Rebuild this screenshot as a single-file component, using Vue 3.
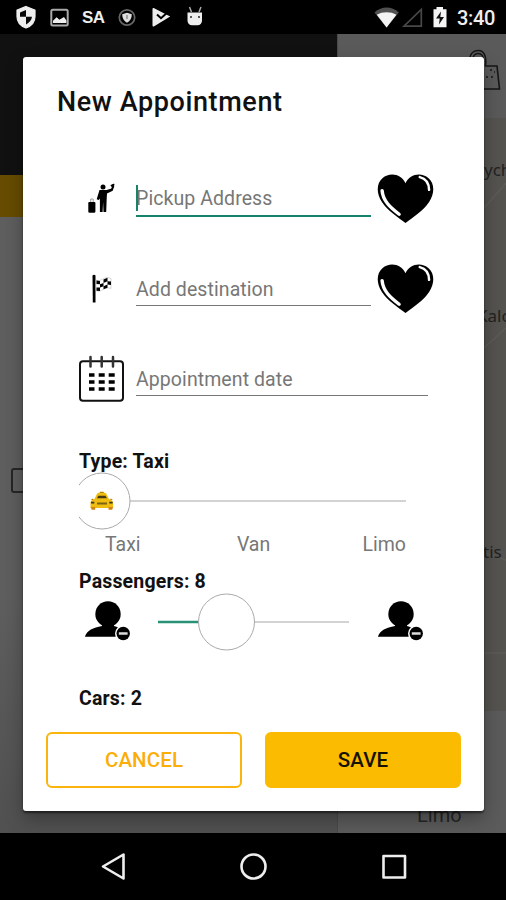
<script setup>
import { ref } from 'vue'

const pickup = ref('')
const destination = ref('')
const date = ref('')
const types = ['Taxi', 'Van', 'Limo']
</script>

<template>
  <div class="screen">
    <header class="status">
      <svg class="status-left" width="210" height="34" viewBox="0 0 210 34">
        <path d="M26 6.500l9 3.600v6.400c0 5.400-3.800 9.600-9 11.500-5.200-1.900-9-6.100-9-11.500v-6.400z" fill="#eee" stroke="#eee" stroke-width="1.200" />
        <path d="M26 10v6.800h-6v-4.400zM26 16.800h6c-.4 3.500-2.800 6.200-6 7.700z" fill="#080808" />
        <rect x="51.300" y="9.800" width="16.400" height="15.600" rx="1.500" fill="none" stroke="#a9a9a9" stroke-width="2" />
        <path d="M53 23v-2.200l3.600-3.600 2.800 2.600 4.600-2.800 2.400 3.400V23z" fill="#eee" />
        <circle cx="127" cy="17.500" r="7.700" fill="none" stroke="#666" stroke-width="1.700" />
        <path d="M127 12.800l4.800 1.500c0 4-1.500 6.600-4.800 8.500-3.300-1.900-4.800-4.500-4.800-8.500z" fill="#ddd" />
        <path d="M127 15v4" stroke="#888" stroke-width="1.400" />
        <path d="M152.500 9c0-1 .8-1.200 1.700-.7l16 8.300-16 9.600c-1 .6-1.700.2-1.700-.8z" fill="#eee" />
        <path d="M157 14.500l4 3.700 7.500-6.700" fill="none" stroke="#000" stroke-width="2" />
        <path d="M187.500 12.500h14.500v8c0 3-2 4.800-4.500 4.800h-5.500c-2.500 0-4.500-1.800-4.500-4.800z" fill="#eee" />
        <path d="M189.500 7l2 5M201 7l-2 5" stroke="#aaa" stroke-width="1.500" />
        <circle cx="191" cy="17" r=".9" fill="#111" /><circle cx="199" cy="17" r=".9" fill="#111" />
      </svg>
      <span class="sa">SA</span>
      <svg class="status-right" width="75" height="34" viewBox="374 0 75 34">
        <path d="M374.500 12.500c7.300-6.600 17-6.600 24.300 0L386.600 27.500z" fill="#505050" />
        <path d="M376.800 14.800c5.600-3.300 14-3.300 19.600 0L386.600 27.500z" fill="#f3f3f3" />
        <path d="M404 26.200h17.300V9.500z" fill="none" stroke="#484848" stroke-width="1.700" />
        <path d="M433.500 9.300h3V7h6.500v2.300h3.500v18h-13z" fill="#f5f5f5" />
        <path d="M441 11.500l-5 7h3.700l-.7 6 5-7.500h-3.700z" fill="#111" />
      </svg>
      <span class="clock">3:40</span>
    </header>

    <main class="app">
      <aside class="drawer">
        <div class="drawer-head"></div>
        <div class="drawer-bar"></div>
        <svg class="drawer-icon" width="24" height="26" viewBox="0 0 24 26"><rect x="1" y="1" width="26" height="23" rx="2" fill="none" stroke="#262626" stroke-width="2" /></svg>
      </aside>
      <section class="map">
        <div class="map-head">
          <svg width="34" height="44" viewBox="0 0 34 44" fill="none" stroke="#161616" stroke-width="1.600">
            <path d="M1 10C1 4 5 1.500 9.500 1.500S18 6 16.500 17" /><path d="M4 10c0-4 2.500-5.500 5.500-5.500s5.500 3 5 8" />
            <path d="M16 17h12l2.500 23H14" /><path d="M17 28h2m3 0h2M21 21h2m2 2h1" />
          </svg>
        </div>
        <div class="map-canvas">
          <svg class="roads" width="168" height="593" viewBox="0 0 168 593" fill="none" stroke="#5e5c57" stroke-width="1.500"><path d="M146 90l22-25M146 230l22-20M146 435l22 7M146 535h22" /></svg>
          <span class="place p1">ych</span>
          <span class="place p2">Kalo</span>
          <span class="place p3">tis</span>
        </div>
        <div class="map-foot"><span>Limo</span></div>
      </section>

      <form class="dialog" @submit.prevent>
        <h1>New Appointment</h1>

        <div class="row">
          <svg class="lead" width="45" height="50" viewBox="79 174 45 50">
            <circle cx="103" cy="187" r="2.500" />
            <path d="M99.500 190h7l4.500-1.200 1.800-3.300 1.500.7-1.600 4.500-5.700 2.800-.3 5.200-.5 13.300h-2.700l-.4-10-.5 10h-2.700v-13.500l-1.200 1.500-2-.7z" />
            <path d="M110.500 185c1.700 0 2.200-1.800 4-.9l-.8 3.300-2.700-1z" />
            <path d="M89.500 202h4.700c.8 0 1.200.4 1.200 1.300v8.200c0 .8-.4 1.200-1.200 1.200h-4.700c-.8 0-1.200-.4-1.200-1.200v-8.200c0-.9.4-1.300 1.200-1.300z" /><path d="M90.700 202v-3h2.500v3" fill="none" stroke="#777" stroke-width=".7" />
          </svg>
          <label class="field active"><i class="caret"></i><input v-model="pickup" placeholder="Pickup Address" /></label>
          <svg class="heart" width="57" height="52" viewBox="0 0 58 52">
            <path d="M29 50.500C21 44 11 38 5 29-1 20-.5 10 5.500 4.800 13-1.800 25 .5 29 10c4-9.500 16-11.800 23.500-5.200C58.500 10 59 20 53 29 47 38 37 44 29 50.500z" />
            <path d="M5.200 17.500C6 28 13.500 34.500 22.500 41.500" fill="none" stroke="#fff" stroke-width="3.500" stroke-linecap="round" />
            <path d="M43.500 3.700c6.200 1.500 9.300 5.800 9.500 13" fill="none" stroke="#fff" stroke-width="2.500" stroke-linecap="round" />
          </svg>
        </div>

        <div class="row">
          <svg class="lead" width="45" height="50" viewBox="79 264 45 50">
            <path d="M92.500 275.500c1-1 2.300-1 3 0v27h-2.700z" />
            <path d="M96 280c5 3 8-5 15-1.500v10c-6-3-10 5-15 2z" fill="#fff" stroke="#bbb" stroke-width=".6" />
            <path d="M96.500 280.500l3.500.5v3.300l-3.500-.4zM103.500 279.500l4-1.800v3.500l-4 1.800zM100 284.300l3.500-1.300v3.300l-3.500 1.300zM107.500 281.200l3.500.4v3.500l-3.500-.6zM96.500 287.500l3.500.1v3.400l-3.500-.3zM103.500 286.300l4-1.800v3.300l-4 1.500z" />
          </svg>
          <label class="field"><input v-model="destination" placeholder="Add destination" /></label>
          <svg class="heart" width="57" height="52" viewBox="0 0 58 52">
            <path d="M29 50.500C21 44 11 38 5 29-1 20-.5 10 5.500 4.800 13-1.800 25 .5 29 10c4-9.500 16-11.800 23.500-5.200C58.500 10 59 20 53 29 47 38 37 44 29 50.500z" />
            <path d="M5.200 17.500C6 28 13.500 34.500 22.500 41.500" fill="none" stroke="#fff" stroke-width="3.500" stroke-linecap="round" />
            <path d="M43.500 3.700c6.200 1.500 9.300 5.800 9.500 13" fill="none" stroke="#fff" stroke-width="2.500" stroke-linecap="round" />
          </svg>
        </div>

        <div class="row">
          <svg class="lead" width="45" height="50" viewBox="79 354 45 50">
            <rect x="80" y="361.200" width="43" height="39.500" rx="3" fill="none" stroke="#111" stroke-width="2" />
            <path d="M90.500 357v9.500M101.700 357v9.500M113 357v9.500" stroke="#333" stroke-width="2.500" stroke-linecap="round" />
            <path d="M89 375h5.500m4.200 0h6m4 0h6M89 382h5.500m4.200 0h6m4 0h6M89 389h5.500m4.200 0h6m4 0h6" stroke="#000" stroke-width="3.700" />
          </svg>
          <label class="field wide"><input v-model="date" placeholder="Appointment date" /></label>
        </div>

        <div class="label type-label">Type: Taxi</div>
        <div class="slider type-slider">
          <svg width="328" height="58" viewBox="79 472 328 58">
            <path d="M130 501H406" stroke="#d3d3d3" stroke-width="2" />
            <circle cx="102" cy="501" r="28" fill="#fff" stroke="#aaa" stroke-width="1" />
            <path d="M99.500 493l.7-1.300h3.200l.7 1.300z" fill="#a87800" />
            <path d="M90.500 503c0-2 1.500-3.500 4-4l2.300-4.700c.5-1 1.200-1.500 2.300-1.500h5.200c1.100 0 1.800.5 2.300 1.500l2.300 4.700c2.500.5 4.200 2 4.200 4v5h-22.600z" fill="#efbd12" />
            <path d="M97 498.300l1.300-2.600h7.200l1.400 2.600z" fill="#453a16" />
            <path d="M90.700 499.500l2.500-1v1.800zM113 499.500l-2.500-1v1.800z" fill="#b67a08" />
            <path d="M90.700 507h4.500v2.700h-3.500zM108.500 507h4.500l-.8 2.700h-3.700z" fill="#d18411" />
            <path d="M91 501.700h3.300v1.800H91zM109.300 501.700h3.300v1.800h-3.300z" fill="#333" />
            <path d="M97 503.500h10" stroke="#7b6514" stroke-width="2" />
          </svg>
        </div>
        <div class="ticks"><span v-for="t in types" :key="t">{{ t }}</span></div>

        <div class="label pass-label">Passengers: 8</div>
        <div class="passengers">
          <svg width="48" height="46" viewBox="0 0 48 46">
            <circle cx="24" cy="15" r="12.700" /><path d="M18 24h12v3c7 2 9 4 11 10.700H.9C3 31 9 29 18 27z" />
            <circle cx="39.200" cy="34.500" r="8.200" fill="#fff" /><circle cx="39.200" cy="34.500" r="6.700" /><path d="M34.800 34.500h8.800" stroke="#ddd" stroke-width="2.500" />
          </svg>
          <svg class="range" width="193" height="58" viewBox="0 0 193 58">
            <path d="M41 29h151" stroke="#d3d3d3" stroke-width="2" /><path d="M1 29h41" stroke="#289277" stroke-width="2.500" />
            <circle cx="69.500" cy="29" r="28" fill="#fff" stroke="#aaa" />
          </svg>
          <svg width="48" height="46" viewBox="0 0 48 46">
            <circle cx="24" cy="15" r="12.700" /><path d="M18 24h12v3c7 2 9 4 11 10.700H.9C3 31 9 29 18 27z" />
            <circle cx="39.200" cy="34.500" r="8.200" fill="#fff" /><circle cx="39.200" cy="34.500" r="6.700" /><path d="M34.800 34.500h8.800" stroke="#ddd" stroke-width="2.500" />
          </svg>
        </div>
        <div class="label cars-label">Cars: 2</div>

        <div class="actions">
          <button type="button" class="cancel">CANCEL</button>
          <button type="submit" class="save">SAVE</button>
        </div>
      </form>
    </main>

    <nav class="nav">
      <svg width="506" height="66" viewBox="0 0 506 66" fill="none" stroke="#eee" stroke-width="2.600" stroke-linejoin="round">
        <path d="M103 33.500L123.500 21.500v24z" /><circle cx="253.500" cy="33.500" r="12" /><rect x="383.500" y="23" width="21.500" height="21.500" />
      </svg>
    </nav>
  </div>
</template>

<style>
body { margin: 0; overflow: hidden; }
</style>

<style scoped>
* { box-sizing: border-box; }
.screen { width: 506px; height: 900px; display: flex; flex-direction: column; font-family: Roboto, "Liberation Sans", sans-serif; background: #000; }
svg { display: block; flex: none; }
.status { position: relative; height: 34px; display: flex; align-items: center; color: #eee; overflow: hidden; }
.sa { position: absolute; left: 82px; top: 7px; font: 700 17px/21px "Liberation Sans", sans-serif; letter-spacing: -.7px; }
.status-right { margin-left: 164px; }
.clock { margin-left: 8px; font-size: 20px; line-height: 34px; font-weight: 500; padding-top: 2px; letter-spacing: -.3px; }
.app { position: relative; height: 799px; display: flex; overflow: hidden; background: #5b5b5b; }
.drawer { width: 338px; background: linear-gradient(#5e5e5e 70%, #505050); }
.drawer-head { height: 141px; background: #111; }
.drawer-bar { height: 42px; background: #664c00; }
.drawer-icon { margin: 251px 0 0 11px; }
.map { flex: 1; display: flex; flex-direction: column; border-left: 1px solid #494949; background: #5b5b5b; }
.map-head { height: 84px; padding: 15px 0 0 131px; background: #5a5a5a; overflow: hidden; }
.map-canvas { position: relative; height: 593px; background: #55534f; overflow: hidden; }
.place { position: absolute; font: 17px/20px "Noto Sans", sans-serif; color: #222; }
.p1 { left: 146px; top: 42px; }
.p2 { left: 139px; top: 188px; }
.p3 { left: 145px; top: 424px; }
.map-foot { flex: 1; padding: 92px 0 0 79px; background: #5b5b5b; color: #252525; font-size: 20px; line-height: 24px; }
.dialog { position: absolute; left: 23px; top: 23px; width: 461px; height: 753.500px; border-radius: 3px; background: #fff; box-shadow: 0 2px 2px rgba(0,0,0,.5), 0 8px 18px rgba(0,0,0,.3); overflow: hidden; }
h1 { margin: 0 0 7px; padding-left: 34px; height: 90px; font-size: 27px; line-height: 91px; font-weight: 500; letter-spacing: .6px; color: #111; }
.row { height: 90px; padding-left: 56px; display: flex; align-items: center; }
.field { position: relative; width: 235px; height: 34px; margin-left: 12px; border-bottom: 1px solid #777; }
.field.active { height: 35px; border-bottom: 2.500px solid #17836b; }
.field.wide { width: 292px; }
.heart { margin-left: 6px; }
.field input { display: block; width: 100%; height: 33px; padding: 1px 0 0; border: 0; outline: 0; background: none; font: 400 19.500px/32px Roboto, sans-serif; letter-spacing: .08px; color: #222; }
.field input::placeholder { color: #777; opacity: 1; }
.caret { position: absolute; left: 0; top: 3px; width: 2px; height: 26px; background: #17836b; }
.label { padding-left: 56px; height: 24px; font-size: 19.500px; line-height: 26px; font-weight: 700; letter-spacing: .17px; color: #111; }
.type-label { margin-top: 25px; }
.slider { margin: -1px 0 0 56px; width: 328px; height: 58px; }
.ticks { display: flex; justify-content: space-between; width: 301px; height: 24px; margin: 2px 0 0 82px; font-size: 19.500px; line-height: 26px; color: #777; }
.ticks span:nth-child(2) { padding-left: 4px; }
.pass-label { margin-top: 13px; }
.passengers { display: flex; align-items: center; height: 58px; padding-left: 61px; }
.range { margin: 0 27px 0 25px; }
.cars-label { margin-top: 35px; }
.actions { display: flex; gap: 23px; padding: 22px 23px 0; }
button { flex: 1; height: 56px; border: 2px solid #fbb40c; border-radius: 6px; padding: 0; font: 500 20.500px/24px Roboto, sans-serif; letter-spacing: .1px; }
.cancel { background: #fff; color: #fbad08; }
.save { background: #fbbb00; border-color: #fbbb00; color: #171200; }
.nav { height: 67px; background: #000; }
</style>
